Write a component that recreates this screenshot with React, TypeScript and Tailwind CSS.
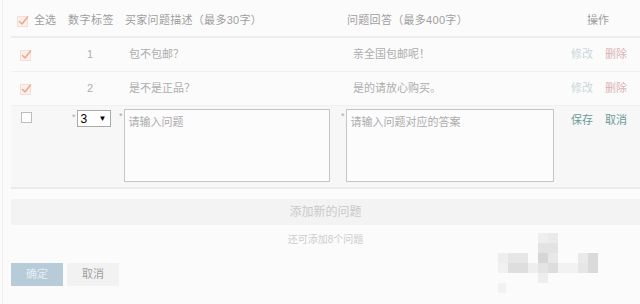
import React from "react";

const font = { fontFamily: '"Liberation Sans", "Noto Sans CJK SC", sans-serif' };

function Checked() {
  return (
    <svg width="12" height="12" viewBox="0 0 12 12" className="block">
      <rect x="0.5" y="1.5" width="10" height="10" fill="#faf0ec" stroke="#f2e0d8" />
      <path d="M2.5 6.5 L5 9 L10.5 2" fill="none" stroke="#eeaa8e" strokeWidth="1.6" strokeLinecap="round" strokeLinejoin="round" />
    </svg>
  );
}

function Unchecked() {
  return <div className="w-[11px] h-[11px] border border-[#bcbcbc] bg-white" />;
}

const mosaic: [number, number, number, number, string][] = [
  [498, 253, 10, 10, "#eeeeee"],
  [508, 253, 20, 10, "#e6e6e6"],
  [508, 263, 20, 10, "#dedede"],
  [498, 263, 10, 10, "#f1f1f1"],
  [528, 263, 10, 10, "#eeeeee"],
  [538, 233, 10, 10, "#eeeeee"],
  [548, 233, 10, 10, "#eaeaea"],
  [538, 243, 20, 10, "#e3e3e3"],
  [538, 253, 10, 10, "#d6d6d6"],
  [548, 253, 10, 10, "#e8e8e8"],
  [538, 263, 10, 10, "#e4e4e4"],
  [548, 263, 10, 10, "#dddddd"],
  [538, 273, 10, 10, "#eeeeee"],
  [558, 263, 20, 10, "#f2f2f2"],
  [578, 253, 10, 10, "#eaeaea"],
  [578, 263, 10, 10, "#e6e6e6"],
  [588, 253, 10, 20, "#dadada"],
  [498, 283, 8, 10, "#f2f2f2"],
];

export default function App() {
  return (
    <div className="relative w-[640px] h-[304px] bg-[#fcfbfc] overflow-hidden" style={font}>
      <div className="ml-[2px] h-full border-l border-[#f0eff0] pl-[8px]">
        {/* header */}
        <div className="flex h-[38px] items-center pt-[5px] border-b-2 border-[#eeeeee] text-[11px] text-[#9e9e9e]">
          <div className="w-[52px] flex items-center pl-[6px] gap-[5px]">
            <Checked />
            <span>全选</span>
          </div>
          <div className="w-[56px] text-center tracking-[0.5px]">数字标签</div>
          <div className="w-[222px] pl-[6px] tracking-[0.3px]">买家问题描述（最多30字）</div>
          <div className="w-[220px] pl-[6px] tracking-[0.3px]">问题回答（最多400字）</div>
          <div className="flex-1 pl-[26px]">操作</div>
        </div>
        {/* rows */}
        {[
          ["1", "包不包邮？", "亲全国包邮呢！"],
          ["2", "是不是正品？", "是的请放心购买。"],
        ].map(([n, q, a]) => (
          <div key={n} className="flex h-[34px] items-center border-b border-[#f1f0f1] text-[11px] text-[#adadad]">
            <div className="w-[52px] pl-[9px]">
              <Checked />
            </div>
            <div className="w-[56px] text-center pr-[2px]">{n}</div>
            <div className="w-[222px] pl-[10px]">{q}</div>
            <div className="w-[220px] pl-[12px]">{a}</div>
            <div className="flex-1 flex gap-[12px] pl-[10px]">
              <span className="text-[#c6d8d8]">修改</span>
              <span className="text-[#dab4b4]">删除</span>
            </div>
          </div>
        ))}
        {/* edit row */}
        <div className="flex h-[83px] pt-[3px] bg-[#f8f7f8] border-b-2 border-[#ecebec] text-[11px]">
          <div className="w-[52px] pl-[10px] pt-[3px]">
            <Unchecked />
          </div>
          <div className="w-[56px] flex items-start pl-[9px] pt-[1px] gap-[1px]">
            <span className="text-[#aaa] text-[9px] leading-[14px]">*</span>
            <div className="w-[34px] h-[17px] bg-white border border-[#a9a9a9] flex items-center justify-between px-[3px] text-[12px] text-black">
              <span>3</span>
              <span className="text-[8px]">▼</span>
            </div>
          </div>
          <div className="w-[222px] flex items-start gap-[1px]">
            <span className="text-[#aaa] text-[9px] leading-[14px]">*</span>
            <div className="w-[206px] h-[73px] border border-[#c6c6c6] bg-[#fdfcfd] px-[4px] pt-[4px] text-[#ababab]">请输入问题</div>
          </div>
          <div className="w-[220px] flex items-start gap-[1px]">
            <span className="text-[#aaa] text-[9px] leading-[14px]">*</span>
            <div className="w-[208px] h-[73px] border border-[#c6c6c6] bg-[#fdfcfd] px-[4px] pt-[4px] text-[#ababab]">请输入问题对应的答案</div>
          </div>
          <div className="flex-1 flex gap-[12px] pl-[10px] pt-[3px] text-[#6a9a9a]">
            <span>保存</span>
            <span>取消</span>
          </div>
        </div>
        {/* add bar */}
        <div className="mt-[10px] h-[26px] bg-[#f4f3f4] flex items-center justify-center text-[12px] text-[#c9c9c9]">
          添加新的问题
        </div>
        <div className="h-[28px] flex items-center justify-center text-[10px] text-[#cdcdcd]">还可添加8个问题</div>
        {/* buttons */}
        <div className="mt-[10px] flex gap-[4px]">
          <div className="w-[52px] h-[23px] bg-[#b7cbd8] flex items-center justify-center text-[11px] text-[#e6eef3]">确定</div>
          <div className="w-[52px] h-[23px] bg-[#f3f2f3] flex items-center justify-center text-[11px] text-[#a0a0a0]">取消</div>
        </div>
      </div>
      {/* pixelated watermark overlay */}
      {mosaic.map(([x, y, w, h, c], i) => (
        <div key={i} className="absolute" style={{ left: x, top: y, width: w, height: h, background: c }} />
      ))}
    </div>
  );
}
